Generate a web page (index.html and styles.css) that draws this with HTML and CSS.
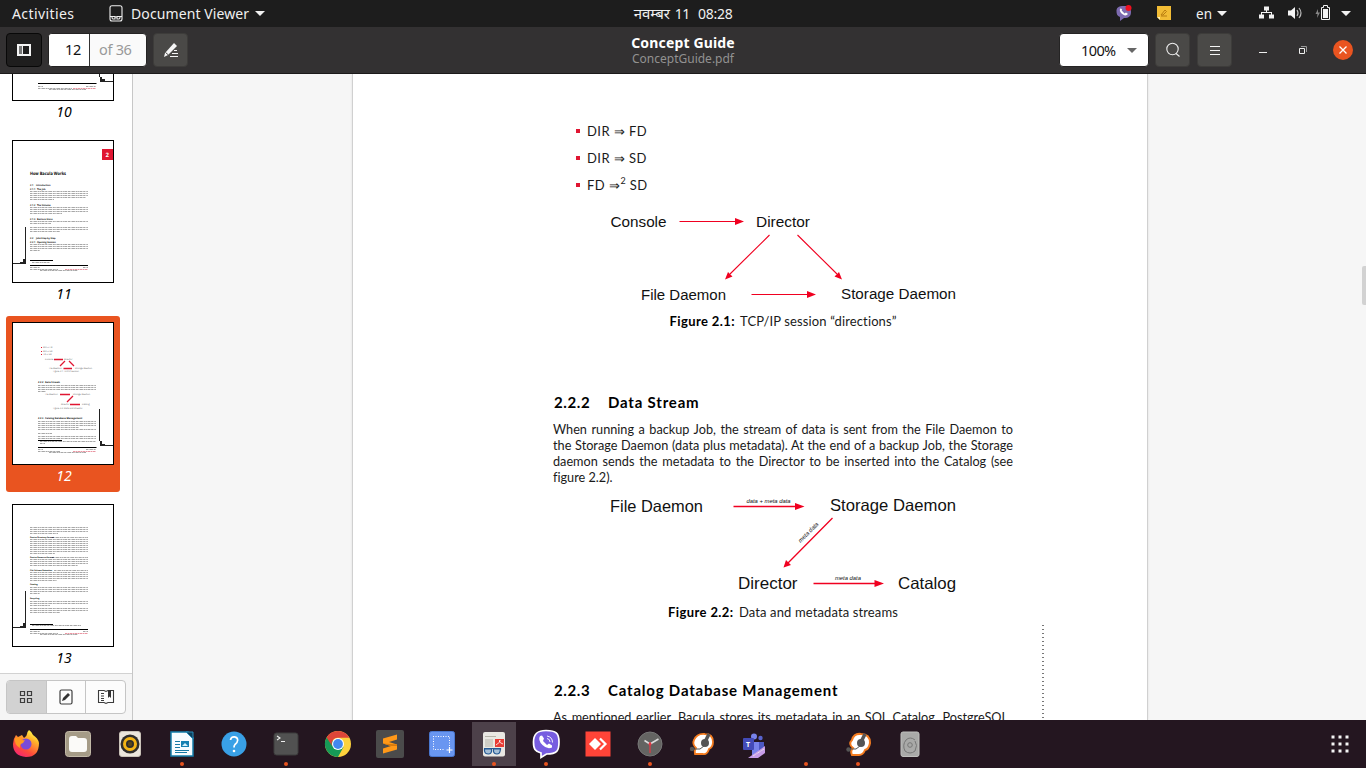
FILE: index.html
```html
<!DOCTYPE html>
<html lang="en">
<head>
<meta charset="utf-8">
<title>Concept Guide</title>
<link rel="stylesheet" href="styles.css">
</head>
<body>
<div class="desktop">
<div class="topbar">
  <div class="top-left">
    <span class="activities">Activities</span>
    <svg class="app-icon" width="14" height="17" viewBox="0 0 14 17" fill="none" stroke="#eee" stroke-width="1.1"><rect x="1" y=".8" width="12" height="15.2" rx="2"/><path d="M1 11.5H3M11 11.5H13M3 11.5H6V14H4Q3 14 3 11.5M8 11.5H11Q11 14 10 14H8ZM6 12H8"/></svg>
    <span class="appname">Document Viewer</span>
    <i class="caret"></i>
  </div>
  <div class="clock"><span class="hindi">नवम्बर</span><span class="clock-day">11</span><span>08:28</span></div>
  <div class="top-right">
    <svg width="242" height="27" viewBox="1115 0 242 27">
      <path d="M1124 6C1130 6 1131 8 1131 12S1129 18 1124 18L1120 21V17C1117 16 1116.500 14 1116.500 11S1118 6 1124 6Z" fill="#7d6bb0"/>
      <path d="M1120 8.500Q1119 12 1123 14.500Q1126 16.500 1128 14L1126 12.500L1124.500 13.500L1121.700 10.500L1122 9Z" fill="#fff"/>
      <circle cx="1128.500" cy="8" r="3" fill="#f01020"/>
      <path d="M1157 6H1171V20H1160L1157 17Z" fill="#f2bc35"/><path d="M1157 17H1160V20Z" fill="#fff1b5"/><path d="M1161 15L1165 10L1166.500 11.500L1163 15ZM1161 16H1167" stroke="#b87c10" fill="none"/>
      <text class="lang" x="1196" y="19" textLength="16" lengthAdjust="spacingAndGlyphs">en</text>
      <path d="M1217 11H1227L1222 16ZM1341 11H1351L1346 16Z" fill="#f1f1f1"/>
      <path d="M1264 6.500H1269V10.500H1264ZM1259 14.500H1264V18.500H1259ZM1269 14.500H1274V18.500H1269ZM1266 10H1267V12H1272V15H1271V13H1262V15H1261V12H1266Z" fill="#f1f1f1"/>
      <path d="M1288 10.500H1291L1295 7V19L1291 15.500H1288Z" fill="#f5f5f5"/><path d="M1297 10Q1299 13 1297 16M1299 8Q1303 13 1299 18" fill="none" stroke="#bbb" stroke-width="1.200"/>
      <path d="M1318 9L1315.500 14H1317.500L1317 18L1320 12.500H1318Z" fill="#888"/>
      <path d="M1321.500 7.500H1323.500V5.500H1327.500V7.500H1329.500V19.500H1321.500Z" fill="none" stroke="#f1f1f1"/><rect x="1323" y="9" width="5" height="9" fill="#f1f1f1"/>
    </svg>
  </div>
</div>

<div class="headerbar">
  <div class="head-left">
    <div class="hbtn pressed"><svg width="14" height="12" viewBox="0 0 14 12"><path d="M1 1H13V11H1Z" fill="none" stroke="#f4f4f4" stroke-width="2"/><path d="M2 2H5V10H2Z" fill="#777"/><path d="M5.500 1V11" stroke="#eee"/></svg></div>
    <div class="page-entry"><span class="page-now">12</span><span class="page-total">of 36</span></div>
    <div class="hbtn edit"><svg width="16" height="16" viewBox="0 0 16 16"><path d="M2 11L11 1L14 4L5 13L1 15Z" fill="#f5f5f5"/><path d="M2.500 10.500L5.500 13" stroke="#4a4947"/><path d="M11 8.500H14M9 11.500H15M7 14.500H15" stroke="#f5f5f5"/></svg></div>
  </div>
  <div class="titles"><div class="title">Concept Guide</div><div class="subtitle">ConceptGuide.pdf</div></div>
  <div class="head-right">
    <div class="zoombox"><span class="zoomval">100%</span><i class="caret dark"></i></div>
    <div class="hbtn search"><svg width="16" height="16" viewBox="0 0 16 16" fill="none" stroke="#eee" stroke-width="1.100"><circle cx="7.500" cy="7" r="5.700"/><path d="M11 11.500L14.500 14.500"/></svg></div>
    <div class="hbtn menu"><svg width="12" height="11" viewBox="0 0 12 11"><path d="M1 1.500H11M1 5.500H11M1 9.500H11" stroke="#f4f4f4"/></svg></div>
    <svg class="wmctl" width="100" height="30" viewBox="1258 35 100 30"><path d="M1259 52.500H1267" stroke="#eee"/><path d="M1299.500 48.500H1304.500V53.500H1299.500Z" fill="none" stroke="#eee"/><path d="M1301 46.500H1306.500V52" fill="none" stroke="#999"/><circle cx="1343" cy="50" r="10" fill="#e95420"/><path d="M1339.500 46.500L1346.500 53.500M1346.500 46.500L1339.500 53.500" stroke="#fff" stroke-width="1.300"/></svg>
  </div>
</div>

<div class="main">
  <div class="sidebar">
    <div class="thumbs"><div class="thumb-list">
      <div class="thumb"><svg class="sheet" viewBox="13 -41 100 141">
        <path d="M38 83.500H96.500" stroke="#000"/><path class="ln" d="M38 86.500H43M86 86.500H96M38 88.500H72M49 89.500H86"/><path class="lr" d="M73 88.500H96"/>
        <path d="M99.500 40V77M103 81.500H113" stroke="#222" fill="none"/><path d="M100 77H102V79H105V82H100Z" fill="#222"/></svg><div class="num">10</div></div>
      <div class="thumb"><svg class="sheet" viewBox="13 141 100 141">
        <rect x="102" y="149" width="11" height="11" fill="#e01632"/><text class="m w" x="105.500" y="157">2</text>
        <text class="m b" x="30" y="175" textLength="36" lengthAdjust="spacingAndGlyphs" font-size="4.500">How Bacula Works</text>
        <g class="m b" font-size="2.300"><text x="30" y="185.500">2.1</text><text x="36" y="185.500">Introduction</text><text x="30" y="189.500">2.1.1</text><text x="37" y="189.500">The Job</text><text x="30" y="205.500">2.1.2</text><text x="37" y="205.500">The Volume</text><text x="30" y="219.500">2.1.3</text><text x="37" y="219.500">Restore Store</text><text x="30" y="238.500">2.2</text><text x="36" y="238.500">Jobs Step by Step</text><text x="30" y="242.500">2.2.1</text><text x="37" y="242.500">Opening Session</text></g>
        <path class="ln" d="M30 191.500H88M30 193.500H88M30 195.500H88M30 197.500H86M30 199.500H54M30 207.500H88M30 209.500H88M30 211.500H88M30 213.500H62M30 221.500H88M30 223.500H51M30 227.500H88M30 229.500H88M30 231.500H60M30 244.500H88M30 246.500H88M30 248.500H88M30 250.500H40"/>
        <path d="M30 260.500H53M30 265.500H88" stroke="#000"/><path class="ln" d="M32 262.500H50M30 267.500H40M83 267.500H88M30 269.500H58M40 270.500H78"/><path class="lr" d="M65 269.500H88"/>
        <path d="M25.500 227V259M13 263.500H25" stroke="#222"/><path d="M23 259H26V264H20V262H23Z" fill="#222"/></svg><div class="num">11</div></div>
      <div class="thumb selected"><svg class="sheet" viewBox="13 323 100 141">
        <g fill="#e01632"><rect x="41" y="347" width="1" height="1"/><rect x="41" y="351" width="1" height="1"/><rect x="41" y="354" width="1" height="1"/></g>
        <g class="m" font-size="2.200"><text x="43" y="348.300">DIR ⇒ FD</text><text x="43" y="352.300">DIR ⇒ SD</text><text x="43" y="355.300">FD ⇒ SD</text><text x="45" y="360.300">Console</text><text x="64" y="360.300">Director</text><text x="49" y="369.300">File Daemon</text><text x="75" y="369.300">Storage Daemon</text><text x="53" y="372.300">Figure 2.1: TCP/IP session</text><text x="45" y="395.300">File Daemon</text><text x="73" y="395.300">Storage Daemon</text><text x="61" y="405.300">Director</text><text x="82" y="405.300">Catalog</text><text x="53" y="409.300">Figure 2.2: Data and streams</text></g>
        <g class="m b" font-size="2.400"><text x="38" y="383.300">2.2.2</text><text x="45" y="383.300">Data Stream</text><text x="38" y="419.300">2.2.3</text><text x="45" y="419.300">Catalog Database Management</text></g>
        <path d="M54 359.500H63M60 366L65 361M69 361L74 366M63.500 368.500H72M60 394.500H70M67 402L73 396M70 404.500H80" stroke="#e01632" stroke-width="1.300"/>
        <path class="ln" d="M38 385.500H96M38 387.500H96M38 389.500H96M38 391.500H46M38 421.500H96M38 423.500H96M38 425.500H96M38 427.500H79M38 429.500H96M38 433.500H52M38 436.500H96M38 438.500H96M40 441.500H96M40 443.500H45"/>
        <path d="M38 440.500H62M38 447.500H96.500" stroke="#000"/><path class="ln" d="M38 449.500H43M86 449.500H96M38 451.500H60M49 452.500H86"/><path class="lr" d="M73 451.500H96"/>
        <path d="M99.500 409V441M103 445.500H113" stroke="#222"/><path d="M100 441H102V444H105V446H100Z" fill="#222"/></svg><div class="num">12</div></div>
      <div class="thumb"><svg class="sheet" viewBox="13 505 100 141">
        <path class="ln" d="M30 527.500H88M30 529.500H88M30 531.500H88M30 533.500H58M52 537.500H88M30 539.500H88M30 541.500H88M30 543.500H88M30 545.500H88M30 547.500H88M30 549.500H88M30 551.500H88M30 553.500H55M52 557.500H88M30 559.500H88M30 561.500H88M30 563.500H88M30 565.500H78M54 570.500H88M30 572.500H88M30 574.500H88M30 576.500H88M30 578.500H88M30 580.500H57M30 587.500H88M30 589.500H88M30 591.500H88M30 593.500H40M30 601.500H88M30 603.500H88M30 605.500H50M30 608.500H88M30 610.500H88M30 612.500H60"/>
        <g class="m b" font-size="2"><text x="30" y="538.300">Device Directory format</text><text x="30" y="558.300">Device Resource format</text><text x="30" y="571.300">File Volume Retention</text><text x="30" y="585.300">Catalog</text><text x="30" y="599.300">Recycling</text></g>
        <path d="M30 624.500H53M30 629.500H88" stroke="#000"/><path class="ln" d="M32 625.500H81M30 631.500H40M83 631.500H88M30 633.500H58M40 634.500H78"/><path class="lr" d="M65 633.500H88"/>
        <path d="M25.500 591V623M13 627.500H25" stroke="#222"/><path d="M23 623H26V628H20V626H23Z" fill="#222"/></svg><div class="num">13</div></div>
    </div></div>
    <div class="side-foot"><div class="switch">
      <div class="sw on"><svg width="14" height="14" viewBox="0 0 14 14" fill="none" stroke="#3c3c3c" stroke-width="1.200"><path d="M1.500 1.500H5.500V5.500H1.500ZM8.500 1.500H12.500V5.500H8.500ZM1.500 8.500H5.500V12.500H1.500ZM8.500 8.500H12.500V12.500H8.500Z"/></svg></div>
      <div class="sw"><svg width="14" height="16" viewBox="0 0 14 16"><rect x="1" y="1" width="12" height="14" rx="1.500" fill="none" stroke="#3c3c3c" stroke-width="1.200"/><path d="M3 12L4 9L9 4L11 6L6 11Z" fill="#333"/></svg></div>
      <div class="sw"><svg width="18" height="16" viewBox="0 0 18 16"><path d="M1.500 1.500H7L9 2.500L11 1.500H16.500V13.500H11L9 14.500L7 13.500H1.500Z" fill="none" stroke="#3c3c3c" stroke-width="1.100"/><path d="M4 4.500H7M4 7H7M4 9.500H7M4 11.500H7" stroke="#3c3c3c"/><path d="M11 1H14V9L12.500 7.500L11 9Z" fill="#333"/></svg></div>
    </div></div>
  </div>
  <div class="docview">
    <div class="page">
      <div class="content">
        <ul class="bullets"><li>DIR ⇒ FD</li><li>DIR ⇒ SD</li><li>FD ⇒<sup>2</sup> SD</li></ul>
        <svg class="fig fig1" width="460" height="113" viewBox="553 199 460 113">
          <g stroke="#f00020" stroke-width="1.100"><path d="M679.500 221.500H736M751.500 294.500H808"/><path d="M769.500 235L730 274M797.500 235L837 274"/></g>
          <g fill="#f00020"><path d="M744 221.500L735 218V225ZM816 294.500L807 291V298Z"/><path d="M725 279.500L728 272L732.500 276.500ZM842 279.500L839 272L834.500 276.500Z"/></g>
          <g class="flabel" font-size="15.500"><text x="610.500" y="227" textLength="56" lengthAdjust="spacingAndGlyphs">Console</text><text x="756" y="227" textLength="54" lengthAdjust="spacingAndGlyphs">Director</text><text x="641" y="300" textLength="85" lengthAdjust="spacingAndGlyphs">File Daemon</text><text x="841" y="299" textLength="115" lengthAdjust="spacingAndGlyphs">Storage Daemon</text></g>
        </svg>
        <div class="caption cap1"><b>Figure 2.1:</b> TCP/IP session “directions”</div>
        <h2 class="h-data"><span class="secno">2.2.2</span><span>Data Stream</span></h2>
        <div class="para"><div class="row">When running a backup Job, the stream of data is sent from the File Daemon to</div><div class="row">the Storage Daemon (data plus metadata). At the end of a backup Job, the Storage</div><div class="row">daemon sends the metadata to the Director to be inserted into the Catalog (see</div><div class="row last">figure 2.2).</div></div>
        <svg class="fig fig2" width="460" height="118" viewBox="553 485 460 118">
          <g stroke="#f00020" stroke-width="1.300"><path d="M733.500 506.500H796M813.500 583.500H876M832.500 518L788 563"/></g>
          <g fill="#f00020"><path d="M804.500 506.500L795 503V510ZM884 583.500L874.500 580V587ZM783.500 567.500L786 560L791 565Z"/></g>
          <g class="flabel" font-size="16.500"><text x="610" y="512" textLength="93" lengthAdjust="spacingAndGlyphs">File Daemon</text><text x="830" y="511" textLength="126" lengthAdjust="spacingAndGlyphs">Storage Daemon</text><text x="738" y="589" textLength="59.500" lengthAdjust="spacingAndGlyphs">Director</text><text x="898" y="589" textLength="58" lengthAdjust="spacingAndGlyphs">Catalog</text></g>
          <g class="flabel it" font-size="6"><text x="746.500" y="503" textLength="44" lengthAdjust="spacingAndGlyphs">data + meta data</text><text x="835" y="580" textLength="26" lengthAdjust="spacingAndGlyphs">meta data</text><text transform="translate(800.500 543) rotate(-45)" x="0" y="0" textLength="26" lengthAdjust="spacingAndGlyphs">meta data</text></g>
        </svg>
        <div class="caption cap2"><b>Figure 2.2:</b> Data and metadata streams</div>
        <h2 class="h-cat"><span class="secno">2.2.3</span><span>Catalog Database Management</span></h2>
        <div class="para"><div class="row short">As mentioned earlier, Bacula stores its metadata in an SQL Catalog. PostgreSQL</div></div>
      </div>
      <div class="dotted"></div>
    </div>
    <div class="scroll"></div>
  </div>
</div>

<div class="dock">
  <div class="slot"><svg viewBox="0 0 52 48"><defs><linearGradient id="ff" x1="0" y1="1" x2=".6" y2="0"><stop offset="0" stop-color="#f0148c"/><stop offset=".4" stop-color="#ff4b3a"/><stop offset=".8" stop-color="#ffb52a"/><stop offset="1" stop-color="#fff04a"/></linearGradient></defs><path d="M29 10Q32 12 33 15Q38 18 39 23Q39 37 26 37Q13 36 13 24Q13 19 16 15L18 17L22 15L24 18Q27 16 27 14Q27 12 29 10Z" fill="url(#ff)"/><circle cx="26" cy="24" r="5.500" fill="#7a4bd8"/><path d="M15 18L20 17Q21 21 25 20L23 23Q19 24 20 28Q14 25 15 18Z" fill="#ff9a20"/></svg></div>
  <div class="slot"><svg viewBox="0 0 52 48"><rect x="13.500" y="11.500" width="25" height="25" rx="3" fill="#a59b87" stroke="#c2b9a7"/><path d="M17 19Q17 16 20 16H24L26 18H32Q35 18 35 21V29Q35 32 32 32H20Q17 32 17 29Z" fill="#fbfaf8"/></svg></div>
  <div class="slot"><svg viewBox="0 0 52 48"><rect x="15.500" y="11.500" width="21" height="25" rx="2.500" fill="#ece6dd" stroke="#c9c2b8"/><circle cx="26" cy="24" r="9.500" fill="#302e2c"/><circle cx="26" cy="24" r="5.500" fill="#302e2c" stroke="#f4b416" stroke-width="3"/><circle cx="26" cy="24" r="2.200" fill="#5b4718"/></svg></div>
  <div class="slot"><svg viewBox="0 0 52 48"><path d="M15 12H32L37 18V36H15Z" fill="#f7fcff" stroke="#167fac" stroke-width="1.500"/><path d="M30 12H37V19Z" fill="#0e405b" stroke="#278dbb"/><path d="M19 21.500H24M19 24.500H24M19 27.500H24M19 30.500H33M19 32.500H31" stroke="#1778a3"/><path d="M25 21H33V27H25Z" fill="#1680b2"/><path d="M26 26L29 23L32 26Z" fill="#d8f2fc"/></svg><i class="dot"></i></div>
  <div class="slot"><svg viewBox="0 0 52 48"><circle cx="26" cy="24" r="12.500" fill="#39a0e6"/><path d="M22.500 20Q23 16.500 26.500 16.800Q30 17.500 29.600 20.500Q29.500 22.500 27 24.500Q26 25.500 26 27.500" fill="none" stroke="#fff" stroke-width="1.700"/><circle cx="26" cy="31" r="1.300" fill="#fff"/></svg></div>
  <div class="slot"><svg viewBox="0 0 52 48"><rect x="14" y="13" width="24" height="22" rx="2.500" fill="#515151" stroke="#3d3d3d"/><path d="M17 16L20 18L17 20M21 21.500H25" fill="none" stroke="#eee" stroke-width="1.100"/></svg><i class="dot"></i></div>
  <div class="slot"><svg viewBox="0 0 52 48"><circle cx="26" cy="24" r="13" fill="#fdd23c"/><path d="M26 24L14.700 17.500A13 13 0 0 0 26 37L31.500 27Z" fill="#169b57"/><path d="M14.700 17.500A13 13 0 0 1 37.300 17.800H26A6 6 0 0 0 20.700 27Z" fill="#dd4639"/><circle cx="26" cy="24" r="6" fill="#fff"/><circle cx="26" cy="24" r="4.900" fill="#4388ef"/></svg></div>
  <div class="slot"><svg viewBox="0 0 52 48"><rect x="12" y="10" width="28" height="28" rx="2" fill="#4b4b4b"/><path d="M33 14.500V19.500L25 22L33 24.500V29.500L19 33.500V28.500L27 26L19 23.500V18.500Z" fill="#ff9818"/><path d="M19 23.500L33 24.500V26L27 26Z" fill="#d87a0c"/></svg></div>
  <div class="slot"><svg viewBox="0 0 52 48"><rect x="13.500" y="11.500" width="25" height="25" rx="2" fill="#6996f1" stroke="#4977d0"/><path d="M17 16.500H33.500V26M17.500 16V29.500H29" fill="none" stroke="#fff" stroke-dasharray="1 1.500"/><path d="M33.500 27V33M30.500 30H36.500" stroke="#fff" stroke-width="1.200"/></svg></div>
  <div class="slot active"><svg viewBox="0 0 52 48"><rect x="15" y="12" width="22" height="24.500" rx="2" fill="#e9e8e3"/><path d="M17 16.500H28M17 20H25M17 22H25M17 24H25M17 26H25" stroke="#a7a69b" stroke-width=".8"/><rect x="27" y="19" width="9" height="8" fill="#e73c35"/><path d="M28 25Q33 22 32 20Q30 22 35 24" fill="none" stroke="#fff" stroke-width=".8"/><path d="M16.500 29H23.500V31.500Q23 34 20.500 34Q17 34 16.500 31ZM25.500 29H32.500L32 31.500Q31.500 34 29 34Q26 34 25.500 31.500Z" fill="#a5bfd6" stroke="#245994" stroke-width="1.200"/><path d="M16 28.500H33" stroke="#245994"/></svg><i class="dot"></i></div>
  <div class="slot"><svg viewBox="0 0 52 48"><path d="M26 10.500C36 10.500 39 13 39 22S37 34 26.500 34L21 37.500V33C15 31.500 13.500 29 13.500 22S16 10.500 26 10.500Z" fill="#775de0" stroke="#fff" stroke-width="1.700"/><path d="M20 16Q17.500 20 22.500 25Q27.500 30 32 27.500L32 25.500L29 23.500L27 25L23 21L24 18.500L22 15.500Z" fill="#fff"/><path d="M27 18.500Q30 19 30 22M27 16Q32.500 17 32.500 22.500" fill="none" stroke="#fff" stroke-width=".9"/></svg><i class="dot"></i></div>
  <div class="slot"><svg viewBox="0 0 52 48"><rect x="13.500" y="11.500" width="25" height="25" fill="#ff4438"/><path d="M17 24L23 18L29 24L23 30Z" fill="#fff"/><path d="M28 18.500L33.500 24L28 29.500" fill="none" stroke="#fff" stroke-width="2.200"/></svg></div>
  <div class="slot"><svg viewBox="0 0 52 48"><circle cx="26" cy="24" r="12" fill="#646462" stroke="#777"/><path d="M26 24L20.500 20.500M26 24L34.500 19" stroke="#ddd" stroke-width="1.600"/><path d="M26 22V33" stroke="#e33946" stroke-width="1.200"/><circle cx="26" cy="24" r="1.500" fill="#e33946"/></svg><i class="dot"></i></div>
  <div class="slot"><svg viewBox="0 0 52 48"><path d="M18 20Q21 13 29 14Q37 14 37 22Q37 27 33 29Q31 35 27 34H19Q18 31 20 28Q16 24 18 20Z" fill="#fff" stroke="#f47c20" stroke-width="1.800"/><circle cx="29" cy="23" r="4" fill="#555"/><path d="M29 22L33 14" stroke="#555" stroke-width="3.500"/><circle cx="16" cy="29" r="2.200" fill="#555"/><path d="M18 29H24L28 26" stroke="#555" fill="none"/></svg></div>
  <div class="slot"><svg viewBox="-2 0 52 48"><circle cx="24" cy="16.500" r="3" fill="#7883ea"/><circle cx="30.500" cy="18" r="2.200" fill="#5863ce"/><path d="M22 22H34V30Q33 34 28 35H22Z" fill="#7883ea"/><path d="M29 22H34V31L29 34Z" fill="#4c58c4"/><rect x="13" y="18" width="11" height="12" rx="1" fill="#434bb8"/><text class="teams" x="16" y="27">T</text><path d="M18 38L35 26V33L28 38Z" fill="#c79ce8"/><path d="M23 36L34 29" stroke="#eee" stroke-dasharray="1 .5"/></svg></div>
  <div class="slot"><i class="dot"></i></div>
  <div class="slot"><svg viewBox="0 0 52 48"><path d="M20 20Q22 13 29 14Q38 14 38 23Q37 29 33 30Q31 35 27 35H20Q18 31 21 28Q16 24 20 20Z" fill="#fff" stroke="#f47c20" stroke-width="2"/><circle cx="29" cy="23" r="4" fill="#555"/><path d="M29 22L33 14" stroke="#555" stroke-width="3.500"/><circle cx="16.500" cy="29.500" r="2.200" fill="#555"/><path d="M18 29H24L28 26" stroke="#555" fill="none"/></svg><i class="dot"></i></div>
  <div class="slot"><svg viewBox="0 0 52 48"><rect x="17" y="12" width="18" height="24.500" rx="2" fill="#a9a9a8" stroke="#c0c0be"/><path d="M31 20Q26 16 22 20Q18 25 21 31Q26 35 31 31Q34 25 31 21" fill="none" stroke="#777"/><circle cx="26" cy="25" r="2.300" fill="none" stroke="#777"/></svg></div>
  <svg class="apps" width="18" height="18" viewBox="0 0 18 18" fill="#f4f4f4"><path d="M.5 .5h3v3h-3zM7.500 .5h3v3h-3zM14.500 .5h3v3h-3zM.5 7.500h3v3h-3zM7.500 7.500h3v3h-3zM14.500 7.500h3v3h-3zM.5 14.500h3v3h-3zM7.500 14.500h3v3h-3zM14.500 14.500h3v3h-3z"/></svg>
</div>
</div>
</body>
</html>
```
FILE: styles.css
```css
* { box-sizing: border-box; }
body { margin: 0; font-family: "Noto Sans", "Open Sans", sans-serif; }
svg { display: block; flex: none; }
.desktop { width: 1366px; height: 768px; display: flex; flex-direction: column; overflow: hidden; }

.topbar { height: 27px; background: #1d1d1d; color: #f0f0f0; display: grid; grid-template-columns: 1fr auto 1fr; align-items: center; font-size: 14px; line-height: 27px; white-space: nowrap; }
.top-left { display: flex; align-items: center; padding-left: 12px; }
.activities { width: 97px; letter-spacing: .4px; }
.appname { margin-left: 8px; width: 119px; letter-spacing: .1px; }
.caret { margin-left: 5px; border: 5px solid transparent; border-top-color: #f1f1f1; border-bottom: 0; }
.clock { display: flex; letter-spacing: -.3px; }
.hindi { width: 37px; font-size: 15px; letter-spacing: 0; }
.clock-day { margin: 0 8px 0 4px; }
.top-right { justify-self: end; padding-right: 9px; }
.lang { font-size: 14px; fill: #f0f0f0; }

.headerbar { height: 47px; background: #333132; border-bottom: 1px solid #1b1a1a; display: grid; grid-template-columns: 1fr auto 1fr; align-items: start; }
.head-left { display: flex; padding: 6px 0 0 6px; }
.hbtn { width: 35px; height: 34px; border-radius: 4px; border: 1px solid #3d3c3a; background: #4a4947; display: flex; align-items: center; justify-content: center; }
.hbtn.pressed { width: 36px; background: #1f1e1e; border-color: #080808; }
.page-entry { display: flex; width: 99px; height: 34px; margin: 0 6px; border: 1px solid #242323; border-radius: 4px; background: #fafafa; overflow: hidden; font-size: 14.5px; line-height: 31px; }
.page-now { width: 41px; padding-left: 16px; background: #fff; color: #111; border-right: 1px solid #333; letter-spacing: -.4px; }
.page-total { padding-left: 9px; color: #999; letter-spacing: -.3px; }
.titles { text-align: center; padding-top: 7px; }
.title { color: #fff; font-weight: 700; font-size: 14px; line-height: 18px; letter-spacing: .15px; }
.subtitle { color: #929191; font-size: 12px; line-height: 14px; letter-spacing: 0; }
.head-right { display: flex; justify-self: end; padding: 6px 8px 0 0; }
.zoombox { width: 90px; height: 34px; margin-right: 6px; border: 1px solid #252424; border-radius: 4px; background: #fff; display: flex; align-items: center; font-size: 14.5px; color: #111; }
.zoomval { padding-left: 21px; width: 62px; letter-spacing: -.6px; }
.caret.dark { border-top-color: #666; margin-left: 5px; }
.search { margin-right: 7px; }
.wmctl { margin: 2px 0 0 26px; }

.main { height: 646px; display: flex; background: #f6f6f6; }
.sidebar { width: 133px; border-right: 1px solid #c7c7c7; display: flex; flex-direction: column; background: #fff; }
.thumbs { height: 599px; overflow: hidden; }
.thumb-list { margin-top: -122px; display: flex; flex-direction: column; gap: 6px; }
.thumb { height: 176px; flex: none; width: 114px; margin-left: 6px; padding: 6px; border-radius: 3px; }
.thumb.selected { background: #e95420; color: #fff; }
.sheet { width: 102px; height: 143px; background: #fff; border: 1px solid #000; }
.num { text-align: center; font-style: italic; font-size: 14px; line-height: 22px; padding-left: 2px; }
.m { font-family: "Open Sans", sans-serif; fill: #555; text-rendering: geometricPrecision; }
.m.b { font-weight: 700; fill: #000; }
.m.w { font-size: 6px; font-weight: 700; fill: #fff; }
.ln { stroke: #8a8a8a; stroke-width: .75; stroke-dasharray: 2 .5 1 .4 3 .7; fill: none; }
.lr { stroke: #e47b8a; stroke-width: .8; stroke-dasharray: 2 .5; }
.side-foot { height: 47px; border-top: 1px solid #d2d2d2; background: #f5f5f5; padding: 6px; }
.switch { width: 120px; height: 34px; border: 1px solid #c5c5c5; border-radius: 4px; display: flex; background: #fcfcfc; overflow: hidden; }
.sw { flex: 1; display: flex; align-items: center; justify-content: center; }
.sw + .sw { border-left: 1px solid #c5c5c5; }
.sw.on { background: #d2d2d2; }

.docview { flex: 1; display: flex; justify-content: space-between; padding-left: 219px; overflow: hidden; }
.page { width: 796px; flex: none; background: #fff; border: solid #d0d0d0; border-width: 0 1px; display: flex; box-shadow: 0 0 2px #ddd; }
.content { padding: 43px 0 0 200px; width: 660px; flex: none; font-family: Lato, "Noto Sans", sans-serif; color: #1a1a1a; font-size: 13px; font-variant-ligatures: none; }
.bullets { list-style: none; margin: 0; padding: 0 0 0 23px; height: 82px; letter-spacing: .45px; }
.bullets li { height: 27px; line-height: 26px; display: flex; align-items: center; white-space: pre; }
.bullets li::before { content: ""; width: 4px; height: 4px; background: #e01632; margin-right: 7px; }
.bullets sup { font-size: 9px; line-height: 9px; align-self: flex-start; margin-top: 5px; }
.fig { overflow: visible; }
.flabel { font-family: "Liberation Sans", Arial, sans-serif; fill: #111; }
.it { font-style: italic; }
.caption { text-align: center; line-height: 18px; height: 20px; white-space: nowrap; width: 460px; letter-spacing: .12px; }
.caption b { color: #000; letter-spacing: .4px; margin-right: 2px; }
h2 { margin: 0; display: flex; font-size: 15px; line-height: 18px; height: 20px; color: #000; letter-spacing: .8px; white-space: nowrap; padding-left: 1px; }
.secno { width: 54px; letter-spacing: .6px; }
.h-data { margin-top: 61px; }
.h-cat { margin-top: 58px; }
.para { margin-top: 8px; width: 460px; font-size: 12.7px; }
.row { line-height: 16px; text-align-last: justify; white-space: nowrap; }
.row.last { text-align-last: left; }
.row.short { width: 455px; }
.dotted { margin: 551px 0 0 29px; height: 95px; width: 2px; background: repeating-linear-gradient(#777 0 1px, transparent 1px 4px); }
.scroll { width: 4px; height: 39px; margin-top: 192px; background: #d2d2d2; border-radius: 2px 0 0 2px; }

.dock { height: 48px; background: #241620; display: flex; align-items: center; }
.slot { width: 52px; height: 48px; position: relative; }
.slot svg { width: 52px; height: 48px; position: relative; }
.slot.active { background: linear-gradient(#4d414a, #4d414a) center / 44px 44px no-repeat; }
.dot { position: absolute; left: 24px; top: 42px; width: 4px; height: 4px; border-radius: 50%; background: #e95420; }
.teams { font-size: 7px; font-weight: 700; fill: #fff; }
.apps { margin: 0 17px 0 auto; }
```
